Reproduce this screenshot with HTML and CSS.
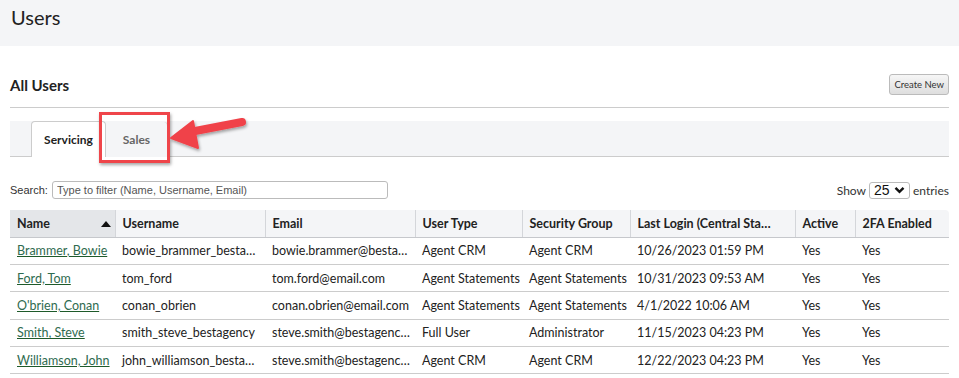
FILE: index.html
```html
<!DOCTYPE html>
<html>
<head>
<meta charset="utf-8">
<link rel="stylesheet" href="styles.css">
</head>
<body>
<header class="page-head"><h1 class="page-title">Users</h1></header>
<main class="content">
  <div class="section-head">
    <h2 class="section-title">All Users</h2>
    <button class="btn">Create New</button>
  </div>
  <div class="tabs">
    <div class="tab active">Servicing</div>
    <div class="tab">Sales</div>
  </div>
  <div class="controls">
    <label class="search">Search: <input class="search-input" type="text" placeholder="Type to filter (Name, Username, Email)"></label>
    <div class="length">Show <span class="select">25 <svg width="11" height="8" viewBox="0 0 11 8"><path d="M1.5 1.8 L5.5 5.8 L9.5 1.8" fill="none" stroke="#111" stroke-width="2.4"/></svg></span> entries</div>
  </div>
  <table class="grid">
    <colgroup>
      <col style="width:105px"><col style="width:150px"><col style="width:150px"><col style="width:107px"><col style="width:108px"><col style="width:165px"><col style="width:60px"><col>
    </colgroup>
    <thead>
      <tr>
        <th class="sorted">Name <span class="caret"></span></th>
        <th>Username</th><th>Email</th><th>User Type</th><th>Security Group</th><th>Last Login (Central Sta…</th><th>Active</th><th>2FA Enabled</th>
      </tr>
    </thead>
    <tbody>
      <tr><td><a href="#">Brammer, Bowie</a></td><td>bowie_brammer_besta…</td><td>bowie.brammer@besta…</td><td>Agent CRM</td><td>Agent CRM</td><td>10/26/2023 01:59 PM</td><td>Yes</td><td>Yes</td></tr>
      <tr><td><a href="#">Ford, Tom</a></td><td>tom_ford</td><td>tom.ford@email.com</td><td>Agent Statements</td><td>Agent Statements</td><td>10/31/2023 09:53 AM</td><td>Yes</td><td>Yes</td></tr>
      <tr><td><a href="#">O'brien, Conan</a></td><td>conan_obrien</td><td>conan.obrien@email.com</td><td>Agent Statements</td><td>Agent Statements</td><td>4/1/2022 10:06 AM</td><td>Yes</td><td>Yes</td></tr>
      <tr><td><a href="#">Smith, Steve</a></td><td>smith_steve_bestagency</td><td>steve.smith@bestagenc…</td><td>Full User</td><td>Administrator</td><td>11/15/2023 04:23 PM</td><td>Yes</td><td>Yes</td></tr>
      <tr><td><a href="#">Williamson, John</a></td><td>john_williamson_besta…</td><td>steve.smith@bestagenc…</td><td>Agent CRM</td><td>Agent CRM</td><td>12/22/2023 04:23 PM</td><td>Yes</td><td>Yes</td></tr>
    </tbody>
  </table>
</main>
<div class="callout"></div>
<svg class="arrow" width="90" height="50" viewBox="0 0 90 50">
  <defs><filter id="sh" x="-20%" y="-20%" width="140%" height="160%"><feDropShadow dx="1" dy="2" stdDeviation="1.5" flood-color="#000" flood-opacity="0.35"/></filter></defs>
  <g filter="url(#sh)">
    <path d="M24 24 L76 14" stroke="#f0434a" stroke-width="8" stroke-linecap="round"/>
    <path d="M5 30 L27 13 L32 40 Z" fill="#f0434a" stroke="#f0434a" stroke-width="2" stroke-linejoin="round"/>
  </g>
</svg>
</body>
</html>
```

FILE: styles.css
```css
* { box-sizing: border-box; }
body { margin: 0; background: #fff; font-family: Lato, "Source Sans Pro", "Liberation Sans", sans-serif; color: #222; position: relative; }
.page-head { background: #f4f5f7; height: 46px; padding: 5px 11px 0; }
.page-title { margin: 0; font-size: 20px; font-weight: 400; line-height: 24px; color: #222; }
.content { padding: 0 10px; }
.section-head { display: flex; justify-content: space-between; align-items: center; height: 62px; padding-top: 16px; border-bottom: 1px solid #ccc; }
.section-title { margin: 0; font-size: 15px; font-weight: 700; }
.btn { font-family: inherit; font-size: 9.5px; color: #333; height: 21px; padding: 0 4px; border: 1px solid #bbb; border-radius: 3px; background: linear-gradient(#f6f6f6, #dedede); }
.tabs { display: flex; margin-top: 13px; height: 36px; background: #f4f5f7; border-bottom: 1px solid #ccc; padding: 0 0 0 21px; align-items: flex-end; }
.tab { height: 36px; margin-bottom: -1px; display: flex; align-items: center; justify-content: center; font-size: 12px; font-weight: 700; color: #666; border: 1px solid #ccc; border-bottom: none; border-radius: 4px 4px 0 0; }
.tab.active { width: 75px; background: #fff; color: #222; height: 36px; }
.tab:not(.active) { width: 62px; border-left: none; margin-left: 0; color: #666; background: #f4f5f7; border-top: none; border-radius: 0 4px 0 0; height: 35px; padding-top: 0; }
.controls { display: flex; justify-content: space-between; align-items: center; margin-top: 23px; height: 20px; }
.search { font-family: "Liberation Sans", Arial, sans-serif; font-size: 11px; color: #333; display: flex; align-items: center; gap: 4px; }
.search-input { width: 336px; height: 18px; border: 1px solid #bbb; border-radius: 3px; font-family: "Liberation Sans", Arial, sans-serif; font-size: 11px; padding: 0 4px; }
.search-input::placeholder { color: #555; }
.length { font-size: 12px; color: #333; display: flex; align-items: center; gap: 3px; }
.select { font-family: "Liberation Sans", Arial, sans-serif; font-size: 14px; color: #111; border: 1px solid #bbb; border-radius: 3px; height: 17px; width: 41px; display: flex; align-items: center; justify-content: space-between; padding: 0 4px; }
.grid { width: 100%; border-collapse: collapse; table-layout: fixed; margin-top: 10px; font-size: 12.5px; }
.grid th { background: #f4f5f7; height: 27px; text-align: left; font-weight: 700; padding: 0 7px; border-left: 1px solid #d4d6da; border-bottom: 1px solid #c6c8cc; white-space: nowrap; overflow: hidden; }
.grid th:first-child { border-left: none; }
.grid th:last-child { border-top-right-radius: 4px; }
.grid th.sorted { background: #e4e6e9; position: relative; }
.caret { position: absolute; right: 4px; top: 11px; width: 0; height: 0; border-left: 5px solid transparent; border-right: 5px solid transparent; border-bottom: 6px solid #111; }
.grid td { height: 27.4px; padding: 0 6px 0 7px; border-bottom: 1px solid #ccc; white-space: nowrap; overflow: hidden; color: #222; }
.grid a { color: #2f6b50; text-decoration: underline; text-decoration-color: #1e5a2a; }
.callout { position: absolute; left: 99px; top: 112px; width: 71px; height: 51px; border: 3px solid #ef454a; box-shadow: 1px 2px 3px rgba(0,0,0,0.35); }
.arrow { position: absolute; left: 166px; top: 108px; }
```
